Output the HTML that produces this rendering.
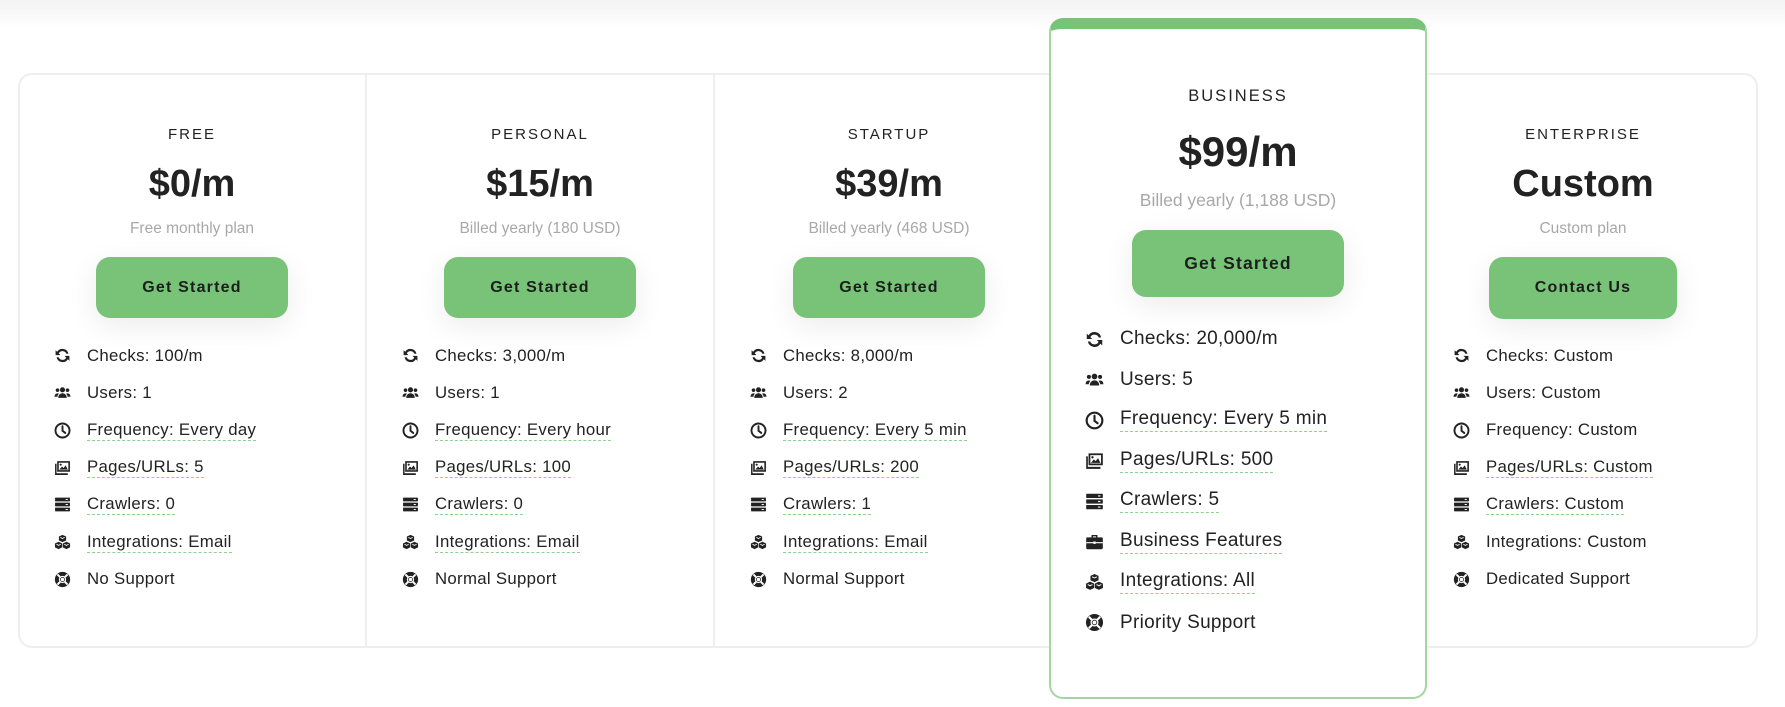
<!DOCTYPE html>
<html><head><meta charset="utf-8"><style>
*{margin:0;padding:0;box-sizing:border-box}
body{width:1785px;height:707px;background:#fff;position:relative;overflow:hidden;font-family:"Liberation Sans",sans-serif;color:#222}
.top{position:absolute;left:0;top:0;width:1785px;height:30px;background:linear-gradient(#f3f3f3,#fff)}
.card{position:absolute;left:18px;top:73px;width:1740px;height:575px;border:2px solid #eeeeee;border-radius:14px;background:#fff}
.div{position:absolute;top:75px;width:2px;height:571px;background:#eeeeee}
.biz{position:absolute;left:1049px;top:18px;width:378px;height:681px;border:2px solid #a3d69e;border-top:11px solid #78c378;border-radius:14px;background:#fff}
.col{position:absolute;width:340px;margin-left:-170px;text-align:center}
.lab{position:absolute;left:0;width:100%;font-size:15px;letter-spacing:2px;line-height:20px}
.pr{position:absolute;left:0;width:100%;font-size:38px;font-weight:bold;line-height:44px}
.sub{position:absolute;left:0;width:100%;font-size:15.5px;color:#a8a8a8;line-height:20px}
.btn{position:absolute;left:50%;background:#78c378;border-radius:14px;font-weight:bold;font-size:16px;letter-spacing:1.2px;color:#1d1d1d;display:flex;align-items:center;justify-content:center;box-shadow:0 8px 30px rgba(0,0,0,.08)}
.ul{position:absolute;list-style:none}
.ul li{display:flex;align-items:center;white-space:nowrap}
.ul li span{display:inline-block}
.d span{border-bottom:1.5px dashed #8fd28c;line-height:1.2}
.s li{height:37.3px;font-size:16.8px;letter-spacing:.3px}
.s li svg{width:17px;height:17px;margin-right:16px;flex:none}
.b li{height:40.5px;font-size:19px;letter-spacing:.3px}
.b li svg{width:19px;height:19px;margin-right:16px;flex:none}
</style></head><body>
<svg width="0" height="0" style="position:absolute">
<defs>
<symbol id="i-sync" viewBox="0 0 16 16"><path d="M13.6 6.3A5.8 5.8 0 0 0 3 4.5L1.5 3v4.6h4.6L4.5 6a3.9 3.9 0 0 1 7.1.3zM2.4 9.7A5.8 5.8 0 0 0 13 11.5l1.5 1.5V8.4H9.9l1.6 1.6a3.9 3.9 0 0 1-7.1-.3z" fill="#222"/></symbol>
<symbol id="i-users" viewBox="0 0 16 16"><circle cx="8" cy="5.5" r="2.4" fill="#222"/><circle cx="3.3" cy="5.8" r="1.7" fill="#222"/><circle cx="12.7" cy="5.8" r="1.7" fill="#222"/><path d="M4 13c0-2.6 1.8-4.3 4-4.3s4 1.7 4 4.3zM0.5 12c0-2 1.2-3.2 2.8-3.2.6 0 1 .1 1.3.4-.8.8-1.3 1.7-1.4 2.8zM15.5 12c0-2-1.2-3.2-2.8-3.2-.6 0-1 .1-1.3.4.8.8 1.3 1.7 1.4 2.8z" fill="#222"/></symbol>
<symbol id="i-clock" viewBox="0 0 16 16"><circle cx="8" cy="8" r="6.6" fill="none" stroke="#222" stroke-width="1.8"/><path d="M8 4v4.3l2.6 2" fill="none" stroke="#222" stroke-width="1.8" stroke-linecap="round"/></symbol>
<symbol id="i-img" viewBox="0 0 16 16"><path d="M3 2h12v10H3z" fill="#222"/><path d="M4.5 3.5h9v7h-9z" fill="#fff"/><path d="M5 10l2.5-3 1.5 1.5 2-2.5L13 10z" fill="#222"/><circle cx="6.3" cy="5.3" r="1" fill="#222"/><path d="M1 4.5h1.4v8.9H13V15H1z" fill="#222"/></symbol>
<symbol id="i-srv" viewBox="0 0 16 16"><rect x="1" y="1.5" width="14" height="3.6" rx=".5" fill="#222"/><rect x="1" y="6.2" width="14" height="3.6" rx=".5" fill="#222"/><rect x="1" y="10.9" width="14" height="3.6" rx=".5" fill="#222"/><path d="M11 3.3h2M11 8h2M11 12.7h2" stroke="#fff" stroke-width="1"/></symbol>
<symbol id="i-cubes" viewBox="0 0 16 16"><path d="M8 .8l3.4 1.6v3.7L8 7.7 4.6 6.1V2.4z" fill="#222"/><path d="M4.3 7.3l3.4 1.6v3.7l-3.4 1.6L.9 12.6V8.9zM11.7 7.3l3.4 1.6v3.7l-3.4 1.6-3.4-1.6V8.9z" fill="#222"/><path d="M6 3.2l2 1 2-1M2.3 9.7l2 1 2-1M9.7 9.7l2 1 2-1" stroke="#fff" stroke-width=".8" fill="none"/></symbol>
<symbol id="i-life" viewBox="0 0 16 16"><circle cx="8" cy="8" r="7.2" fill="#222"/><circle cx="8" cy="8" r="3.4" fill="#fff"/><path d="M3.2 3.2l2.6 2.6M12.8 3.2l-2.6 2.6M3.2 12.8l2.6-2.6M12.8 12.8l-2.6-2.6" stroke="#fff" stroke-width="1.8"/><circle cx="8" cy="8" r="2.3" fill="#222"/><circle cx="8" cy="8" r="1.6" fill="#fff"/></symbol>
<symbol id="i-brief" viewBox="0 0 16 16"><path d="M5.5 2.5h5v2.3H9.3V3.7H6.7v1.1H5.5z" fill="#222"/><rect x="1" y="4.5" width="14" height="10" rx="1" fill="#222"/><path d="M1 9h14" stroke="#fff" stroke-width="1"/><rect x="7" y="8" width="2" height="2" fill="#fff"/></symbol>
</defs></svg>
<div class="top"></div>
<div class="card"></div>
<div class="div" style="left:365px"></div>
<div class="div" style="left:713px"></div>

<div class="col" style="left:192px;top:0">
<div class="lab" style="top:125px">FREE</div>
<div class="pr" style="top:162px">$0/m</div>
<div class="sub" style="top:219px">Free monthly plan</div>
<div class="btn" style="top:257px;width:192px;height:61px;margin-left:-96px">Get Started</div>
</div>
<ul class="ul s" style="left:54px;top:337px">
<li><svg><use href="#i-sync"/></svg><span>Checks: 100/m</span></li>
<li><svg><use href="#i-users"/></svg><span>Users: 1</span></li>
<li class="d"><svg><use href="#i-clock"/></svg><span>Frequency: Every day</span></li>
<li class="d"><svg><use href="#i-img"/></svg><span>Pages/URLs: 5</span></li>
<li class="d"><svg><use href="#i-srv"/></svg><span>Crawlers: 0</span></li>
<li class="d"><svg><use href="#i-cubes"/></svg><span>Integrations: Email</span></li>
<li><svg><use href="#i-life"/></svg><span>No Support</span></li>
</ul>

<div class="col" style="left:540px;top:0">
<div class="lab" style="top:125px">PERSONAL</div>
<div class="pr" style="top:162px">$15/m</div>
<div class="sub" style="top:219px">Billed yearly (180 USD)</div>
<div class="btn" style="top:257px;width:192px;height:61px;margin-left:-96px">Get Started</div>
</div>
<ul class="ul s" style="left:402px;top:337px">
<li><svg><use href="#i-sync"/></svg><span>Checks: 3,000/m</span></li>
<li><svg><use href="#i-users"/></svg><span>Users: 1</span></li>
<li class="d"><svg><use href="#i-clock"/></svg><span>Frequency: Every hour</span></li>
<li class="d"><svg><use href="#i-img"/></svg><span>Pages/URLs: 100</span></li>
<li class="d"><svg><use href="#i-srv"/></svg><span>Crawlers: 0</span></li>
<li class="d"><svg><use href="#i-cubes"/></svg><span>Integrations: Email</span></li>
<li><svg><use href="#i-life"/></svg><span>Normal Support</span></li>
</ul>

<div class="col" style="left:889px;top:0">
<div class="lab" style="top:125px">STARTUP</div>
<div class="pr" style="top:162px">$39/m</div>
<div class="sub" style="top:219px">Billed yearly (468 USD)</div>
<div class="btn" style="top:257px;width:192px;height:61px;margin-left:-96px">Get Started</div>
</div>
<ul class="ul s" style="left:750px;top:337px">
<li><svg><use href="#i-sync"/></svg><span>Checks: 8,000/m</span></li>
<li><svg><use href="#i-users"/></svg><span>Users: 2</span></li>
<li class="d"><svg><use href="#i-clock"/></svg><span>Frequency: Every 5 min</span></li>
<li class="d"><svg><use href="#i-img"/></svg><span>Pages/URLs: 200</span></li>
<li class="d"><svg><use href="#i-srv"/></svg><span>Crawlers: 1</span></li>
<li class="d"><svg><use href="#i-cubes"/></svg><span>Integrations: Email</span></li>
<li><svg><use href="#i-life"/></svg><span>Normal Support</span></li>
</ul>

<div class="biz"></div>
<div class="col" style="left:1238px;top:0">
<div class="lab" style="top:86px;font-size:16.5px">BUSINESS</div>
<div class="pr" style="top:127px;font-size:42px;line-height:50px">$99/m</div>
<div class="sub" style="top:189px;font-size:17.5px;line-height:22px">Billed yearly (1,188 USD)</div>
<div class="btn" style="top:230px;width:212px;height:67px;margin-left:-106px;font-size:17.5px">Get Started</div>
</div>
<ul class="ul b" style="left:1085px;top:319px">
<li><svg><use href="#i-sync"/></svg><span>Checks: 20,000/m</span></li>
<li><svg><use href="#i-users"/></svg><span>Users: 5</span></li>
<li class="d"><svg><use href="#i-clock"/></svg><span>Frequency: Every 5 min</span></li>
<li class="d"><svg><use href="#i-img"/></svg><span>Pages/URLs: 500</span></li>
<li class="d"><svg><use href="#i-srv"/></svg><span>Crawlers: 5</span></li>
<li class="d"><svg><use href="#i-brief"/></svg><span>Business Features</span></li>
<li class="d"><svg><use href="#i-cubes"/></svg><span>Integrations: All</span></li>
<li><svg><use href="#i-life"/></svg><span>Priority Support</span></li>
</ul>

<div class="col" style="left:1583px;top:0">
<div class="lab" style="top:125px">ENTERPRISE</div>
<div class="pr" style="top:162px">Custom</div>
<div class="sub" style="top:219px">Custom plan</div>
<div class="btn" style="top:257px;width:188px;height:62px;margin-left:-94px">Contact Us</div>
</div>
<ul class="ul s" style="left:1453px;top:337px">
<li><svg><use href="#i-sync"/></svg><span>Checks: Custom</span></li>
<li><svg><use href="#i-users"/></svg><span>Users: Custom</span></li>
<li><svg><use href="#i-clock"/></svg><span>Frequency: Custom</span></li>
<li class="d"><svg><use href="#i-img"/></svg><span>Pages/URLs: Custom</span></li>
<li class="d"><svg><use href="#i-srv"/></svg><span>Crawlers: Custom</span></li>
<li><svg><use href="#i-cubes"/></svg><span>Integrations: Custom</span></li>
<li><svg><use href="#i-life"/></svg><span>Dedicated Support</span></li>
</ul>
</body></html>
